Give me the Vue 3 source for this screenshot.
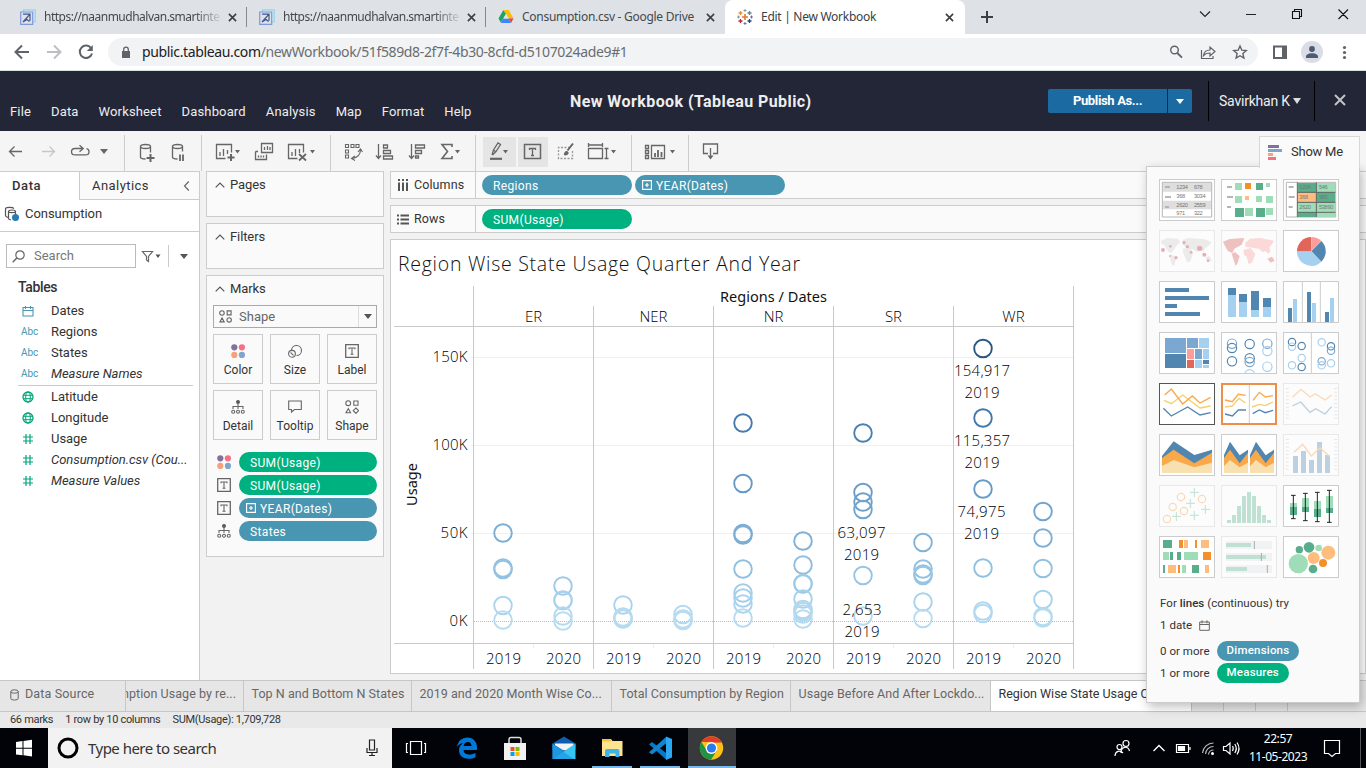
<script setup>
const browserTabs = [
  { title: 'https://naanmudhalvan.smartinternz', icon: 'arrow', fade: true },
  { title: 'https://naanmudhalvan.smartinternz', icon: 'arrow', fade: true },
  { title: 'Consumption.csv - Google Drive', icon: 'drive' },
  { title: 'Edit | New Workbook', icon: 'tableau', active: true },
]
const menus = ['File', 'Data', 'Worksheet', 'Dashboard', 'Analysis', 'Map', 'Format', 'Help']
const dimensions = [
  { name: 'Dates', type: 'date' },
  { name: 'Regions', type: 'abc' },
  { name: 'States', type: 'abc' },
  { name: 'Measure Names', type: 'abc', italic: true },
]
const measures = [
  { name: 'Latitude', type: 'geo' },
  { name: 'Longitude', type: 'geo' },
  { name: 'Usage', type: 'num' },
  { name: 'Consumption.csv (Cou...', type: 'num', italic: true },
  { name: 'Measure Values', type: 'num', italic: true },
]
const markButtons = ['Color', 'Size', 'Label', 'Detail', 'Tooltip', 'Shape']
const markPills = [
  { icon: 'Color', text: 'SUM(Usage)', green: true },
  { icon: 'Label', text: 'SUM(Usage)', green: true },
  { icon: 'Label', text: 'YEAR(Dates)', plus: true },
  { icon: 'Detail', text: 'States' },
]
const regions = [
  { name: 'ER', x: 533.5 }, { name: 'NER', x: 653.5 }, { name: 'NR', x: 773.5 }, { name: 'SR', x: 893.5 }, { name: 'WR', x: 1013.5 },
]
const ticks = [
  { label: '150K', y: 357, w: 35 }, { label: '100K', y: 445, w: 35 }, { label: '50K', y: 533, w: 27 }, { label: '0K', y: 621, w: 18 },
]
const columns = [
  [533, 568, 569.5, 605.5, 620],
  [586, 600, 600.5, 616, 621],
  [605, 617, 618.5, 619],
  [614.5, 619, 620, 620.5],
  [423, 483.5, 533.5, 535, 569, 593, 598, 604, 618],
  [541, 565, 583.5, 584, 599, 609.5, 611.5, 614, 619],
  [433, 492.5, 502, 509.5, 575.5, 616],
  [542.5, 569, 574, 575.5, 602, 618.5],
  [348.5, 418, 489, 568, 611, 613.5],
  [511.5, 538, 568.5, 599.5, 616.5, 618],
]
const stops = [
  [348, [42, 87, 131]], [418, [66, 121, 173]], [489, [103, 155, 199]], [534, [123, 173, 213]],
  [570, [146, 193, 226]], [605, [170, 212, 238]], [622, [185, 221, 241]],
]
function shade(y) {
  for (let i = 1; i < stops.length; i++) {
    if (y <= stops[i][0]) {
      const [a, ca] = stops[i - 1]
      const [b, cb] = stops[i]
      const t = (y - a) / (b - a)
      return `rgb(${ca.map((c, k) => Math.round(c + (cb[k] - c) * t)).join(',')})`
    }
  }
  return 'rgb(185,221,241)'
}
const marks = columns.flatMap((ys, i) => ys.map((y) => ({ x: 503 + i * 60, y, c: shade(y) })))
const labels = [
  { t: '154,917', x: 982, y: 376, w: 56 }, { t: '2019', x: 982, y: 398, w: 35 },
  { t: '115,357', x: 982, y: 446, w: 56 }, { t: '2019', x: 982, y: 468, w: 35 },
  { t: '74,975', x: 981.5, y: 517, w: 48 }, { t: '2019', x: 981.5, y: 539, w: 35 },
  { t: '63,097', x: 861.5, y: 538, w: 48 }, { t: '2019', x: 861.5, y: 560, w: 35 },
  { t: '2,653', x: 862, y: 615, w: 39 }, { t: '2019', x: 862, y: 637, w: 35 },
]
const sheets = [
  { t: 'Top N and Bottom N States', w: 168 },
  { t: '2019 and 2020 Month Wise Co...', w: 200 },
  { t: 'Total Consumption by Region', w: 179 },
  { t: 'Usage Before And After Lockdo...', w: 200 },
]
</script>

<template>
  <div class="screen">
    <!-- browser -->
    <div class="tabstrip">
      <div v-for="(t, i) in browserTabs" :key="i" class="btab" :class="{ active: t.active, sep: i < 2 }">
        <svg v-if="t.icon === 'arrow'" class="fav" viewBox="0 0 16 16" fill="none">
          <path d="M3.500 3V.8h11.700V13H13" stroke="#86dbe8" stroke-width="1.200" />
          <path d="M.7 3h12v12.300H.7z" stroke="#7f97dc" stroke-width="1.200" />
          <path d="M3 5.200h7v6.500M10 5.200L3 13l4-2.500 2.500 2" stroke="#3f568f" stroke-width="1.200" />
        </svg>
        <svg v-else-if="t.icon === 'drive'" class="fav" viewBox="0 0 16 16">
          <path d="M5.300 1L.5 9.500l2.300 4L8 4.800z" fill="#1ea362" /><path d="M5.300 1h5.400l4.800 8.500h-4.700L8 4.800z" fill="#fbbc04" />
          <path d="M5 9.500h5.500l2.700 4.500H2.800z" fill="#4285f4" /><path d="M10.500 9.500h5l-2.300 4.300z" fill="#ea4335" /><path d="M8 5l-2.600 4.500h5.200z" fill="#dee1e6" />
        </svg>
        <svg v-else class="fav" viewBox="0 0 16 16" fill="none" stroke-width="1.300">
          <path d="M8 5v6M5 8h6" stroke="#e8762d" stroke-width="1.600" /><path d="M3.500 2v4M1.500 4h4" stroke="#eb912c" /><path d="M12.500 2v4M10.500 4h4" stroke="#59879b" />
          <path d="M3.500 10v4M1.500 12h4" stroke="#c72037" /><path d="M12.500 10v4M10.500 12h4" stroke="#1f447e" /><path d="M8 0v3M6.500 1.500h3M0 8h3M1.500 6.500v3" stroke="#7199a6" stroke-width=".9" />
          <path d="M8 13v3M6.500 14.500h3M13 8h3M14.500 6.500v3" stroke="#5b6591" stroke-width=".9" />
        </svg>
        <span class="btitle" :class="{ fade: t.fade }">{{ t.title }}</span>
        <svg class="bx" viewBox="0 0 10 10"><path d="M1 1l8 8M9 1L1 9" stroke="#3c4043" stroke-width="1.800" /></svg>
      </div>
      <svg class="strip-tail" viewBox="964 0 402 34" fill="none" stroke="#333">
        <path d="M981 17h12M987 11v12" stroke="#3c4043" stroke-width="2" />
        <path d="M1200 11.500l5 5 5-5M1246 14.500h10" stroke="#222" stroke-width="1.100" />
        <path d="M1292.500 11.500h7v7h-7zM1294.500 11.500v-2h7v7h-2M1338.500 9.500l9.500 9.500M1348 9.500l-9.500 9.500" stroke="#111" stroke-width="1.100" />
      </svg>
    </div>
    <div class="addressbar">
      <svg class="nav" viewBox="0 34 108 36" fill="none" stroke="#5f6368" stroke-width="2">
        <path d="M29 52H16M22 45.500L15.500 52l6.500 6.500" /><path d="M47 52h13M54 45.500l6.500 6.500-6.500 6.500" stroke="#bdbfc2" />
        <path d="M91.300 48.500A6.200 6.200 0 1 0 92 53.500" /><path d="M92.800 45v6h-6z" fill="#5f6368" stroke="none" />
      </svg>
      <div class="omni">
        <svg class="lock" viewBox="0 0 10 13"><path d="M1 5h8v7H1z" fill="#5f6368" /><path d="M2.700 5V3.500a2.300 2.300 0 0 1 4.600 0V5" fill="none" stroke="#5f6368" stroke-width="1.300" /></svg>
        <span class="url"><b>public.tableau.com</b>/newWorkbook/51f589d8-2f7f-4b30-8cfd-d5107024ade9#1</span>
        <svg class="omni-icons" viewBox="1160 38 98 28" fill="none" stroke="#5f6368" stroke-width="1.400">
          <circle cx="1174.500" cy="50" r="3.800" /><path d="M1177.300 53l4.700 4.700" stroke-width="1.800" />
          <path d="M1201.500 50v8.500h11.500v-2.500M1203.500 55.500c.5-3.500 3-5.500 6.500-5.500v-3l5 4.500-5 4.500v-3c-3 0-5 .7-6.500 2.500z" stroke-width="1.200" />
          <path d="M1240 46l1.800 4.200 4.500.4-3.400 3 1 4.400-3.900-2.300-3.900 2.300 1-4.400-3.400-3 4.500-.4z" />
        </svg>
      </div>
      <svg class="right-icons" viewBox="1258 34 108 36">
        <path d="M1274 46.500h12v11.500h-12z" fill="none" stroke="#5f6368" stroke-width="2" /><path d="M1282 46h4v12h-4z" fill="#5f6368" />
        <circle cx="1312" cy="52" r="11" fill="#dadce6" /><circle cx="1312" cy="49" r="2.900" fill="#4d5b73" /><path d="M1306 58v-1.500c0-2 2.500-3.300 6-3.300s6 1.300 6 3.300V58z" fill="#4d5b73" />
        <g fill="#5f6368"><circle cx="1344.500" cy="47.500" r="1.600" /><circle cx="1344.500" cy="52.500" r="1.600" /><circle cx="1344.500" cy="57.500" r="1.600" /></g>
      </svg>
    </div>

    <!-- workbook header -->
    <header class="head">
      <nav class="menus"><span v-for="m in menus" :key="m">{{ m }}</span></nav>
      <h1>New Workbook (Tableau Public)</h1>
      <div class="account">
        <div class="publish"><span>Publish As...</span><i><svg viewBox="0 0 8 5"><path d="M0 0h8L4 5z" fill="#fff" /></svg></i></div>
        <div class="user">Savirkhan K <svg viewBox="0 0 8 6"><path d="M0 0h8L4 6z" fill="#ddd" /></svg></div>
        <div class="close"><svg viewBox="0 0 12 12"><path d="M1 1l10 10M11 1L1 11" stroke="#c4c4c8" stroke-width="2" /></svg></div>
      </div>
    </header>

    <!-- toolbar -->
    <div class="toolbar">
      <svg class="g1" viewBox="0 131 125 40" fill="none" stroke="#666" stroke-width="1.300">
        <path d="M22 151.500H9.500M14.500 146.500l-5 5 5 5" /><path d="M42 151.500h12.500M49.500 146.500l5 5-5 5" stroke="#c6c6c6" />
        <path d="M83 148.500h-8q-3.500 0-3.500 3.200t3.500 3.200h10.500q3.500 0 3.500-3.200 0-2.700-2.500-3.100M79.500 145.300l3.700 3.200-3.700 3.200" /><path d="M100 149h8l-4 5z" fill="#666" stroke="none" />
      </svg>
      <svg class="g2" viewBox="125 131 77 40" fill="none" stroke="#666" stroke-width="1.300">
        <ellipse cx="145.500" cy="146.500" rx="5" ry="2" /><path d="M140.500 146.500v10.500c0 1.300 2 2 5 2M150.500 146.500v6" /><path d="M150.500 154v8M146.500 158h8" stroke-width="2" />
        <ellipse cx="177.500" cy="146.500" rx="5" ry="2" /><path d="M172.500 146.500v10.500c0 1.300 2 2 5 2M182.500 146.500v5" /><path d="M180 154.500v6.500M183 154.500v6.500" stroke-width="1.800" />
      </svg>
      <svg class="g3" viewBox="202 131 129 40" fill="none" stroke="#666" stroke-width="1.300">
        <path d="M225.500 158.500h-9v-14h15v8M220 156v-4M223.500 156v-7M227.500 154v-4" /><path d="M231 154v7M227.500 157.500h7" stroke-width="2" />
        <path d="M261.500 143.500h11v9h-11zM255.500 151.500v8h11v-5M264.500 150v-3M267.500 150v-4M270 150v-3M258.500 157.500v-2M261 157.500v-2M263.500 157.500v-2M258 151.500h-2.500" />
        <path d="M297.500 158.500h-9v-14h15v8M292 156v-4M295.500 156v-7M299.500 153v-4" /><path d="M299 154l7 6.500M306 154l-7 6.500" stroke-width="1.800" />
        <path d="M235 150h5l-2.500 3.500zM310 150h5l-2.500 3.500z" fill="#666" stroke="none" />
      </svg>
      <svg class="g4" viewBox="331 131 145 40" fill="none" stroke="#666" stroke-width="1.300">
        <path d="M345.500 144.500h3v3h-3zM351 144.500h3v3h-3zM356 144.500h3v3h-3zM345.500 150h3v3h-3zM345.500 155h3v3h-3zM360.500 149.500c0 5-3 8-8 9M358 152l2.500-3 2 3M355 156l-3.500 2.500 3.500 2" stroke-width="1.100" />
        <path d="M378.500 144v14M376 155.500l2.500 3 2.500-3M383.500 145h4v3h-4zM383.500 150.500h7v3h-7zM383.500 156h9v3h-9z" />
        <path d="M411.500 144v14M409 155.500l2.500 3 2.500-3M415.500 145h9v3h-9zM415.500 150.500h6v3h-6zM415.500 156h3v2h-3z" />
        <path d="M452 147v-2.500h-10l5.500 7-5.500 7h10V156" stroke-width="1.600" /><path d="M455 150h5l-2.500 3.500z" fill="#666" stroke="none" />
      </svg>
      <svg class="g5" viewBox="476 131 156 40" fill="none" stroke="#666" stroke-width="1.300">
        <path d="M483 137h33v30h-33zM518 137h30v30h-30z" fill="#e5e5e5" stroke="none" />
        <path d="M492 155l1.500-5 4.500-7 2.500 1.500-4.500 7-3.500 3.500M493.500 150l2.500 2" /><path d="M490 158.800h12" stroke-width="2.200" />
        <path d="M524.500 144.500h16v14h-16z" stroke-width="1.500" /><path d="M529.500 150v-1.500h6v1.500M532.500 148.500v7M531 155.500h3" />
        <path d="M570 147.500h-11.500v11h14v-8" stroke-dasharray="2 1.500" stroke="#999" /><path d="M573 143.500l-5.500 7" stroke-width="2" /><path d="M567 151.500c-2-.3-3 2-2.500 3.500 2 0 4-.5 3.700-2.500z" fill="#666" stroke-width="1" />
        <path d="M588.500 148.500h14v10h-14zM588.500 145h14M588.500 143v4M602.500 143v4M606.500 148.500v10M604.500 148.500h4M604.500 158.500h4" />
        <path d="M503 150h5l-2.500 3.500zM611 150h5l-2.500 3.500z" fill="#666" stroke="none" />
      </svg>
      <svg class="g6" viewBox="632 131 57 40" fill="none" stroke="#666" stroke-width="1.300">
        <path d="M651.500 145.500h13v13h-13z" /><path d="M645.500 145.500h3v3h-3zM645.500 150.500h3v3h-3zM645.500 155.500h3v3h-3z" /><path d="M655 157v-4M658 157v-7M661.500 157v-5" stroke-width="1.800" /><path d="M670 150h5l-2.500 3.500z" fill="#666" stroke="none" />
      </svg>
      <svg class="g7" viewBox="689 131 60 40" fill="none" stroke="#666" stroke-width="1.300"><path d="M708 153.500h-4.500v-9.500h14v9.500h-4.500M710.500 148v10" /><path d="M707.500 155.500h6l-3 4z" fill="#666" stroke="none" /></svg>
    </div>

    <!-- workspace -->
    <main class="work">
      <aside class="data">
        <div class="dtabs"><b>Data</b><span>Analytics</span><svg viewBox="0 0 6 10"><path d="M5.300.5L1 5l4.300 4.500" fill="none" stroke="#666" stroke-width="1.200" /></svg></div>
        <div class="source">
          <svg viewBox="4 206 16 16" fill="none" stroke="#555"><path d="M8 217.500c-2-.5-2.500-1-2.500-2v-6.500c0-2 7-2 8.500-.5M8.500 211.500v7c0 .8 1 1.300 2.500 1.500M8.500 211.500c0-2 7-2 7 0v3M8.500 211.500c0 1.500 7 1.500 7 0" stroke-width="1.200" /><circle cx="15.500" cy="217.500" r="3.500" fill="#2a7ab5" stroke="none" /></svg>
          <span>Consumption</span>
        </div>
        <div class="searchrow">
          <div class="search"><svg viewBox="0 0 13 13"><circle cx="8" cy="5" r="4.200" fill="none" stroke="#666" stroke-width="1.200" /><path d="M4.800 8L.7 12.300" stroke="#666" stroke-width="1.400" /></svg><span>Search</span></div>
          <svg class="filter" viewBox="136 244 60 24"><path d="M142.500 251.500h10l-4 5v5l-2-1.500v-3.500z" fill="none" stroke="#666" stroke-width="1.200" /><path d="M155.500 254.500h5l-2.500 3.500zM180 254h8l-4 5z" fill="#555" /><path d="M168.500 245v22" stroke="#ccc" /></svg>
        </div>
        <h2>Tables</h2>
        <div class="fields">
          <template v-for="(group, gi) in [dimensions, measures]" :key="gi">
            <div v-if="gi" class="rule"></div>
            <div v-for="f in group" :key="f.name" class="field">
              <span v-if="f.type === 'abc'" class="abc">Abc</span>
              <svg v-else viewBox="0 0 12 12" fill="none">
                <path v-if="f.type === 'date'" d="M1 2.500h10v8.500H1zM1 5.500h10M3.500 1v3M8.500 1v3" stroke="#4996b2" stroke-width="1.100" />
                <g v-else-if="f.type === 'geo'" stroke="#00a67a"><circle cx="6" cy="6" r="5" stroke-width="1.300" /><ellipse cx="6" cy="6" rx="2.300" ry="5" /><path d="M1.500 4.300h9M1.500 7.700h9" /></g>
                <path v-else d="M1 4h10M1 8h10M4 1v10M8 1v10" stroke="#00a67a" stroke-width="1.200" />
              </svg>
              <span :class="{ it: f.italic }">{{ f.name }}</span>
            </div>
          </template>
        </div>
      </aside>

      <section class="cards">
        <div v-for="c in ['Pages', 'Filters']" :key="c" class="card">
          <div class="ctitle"><svg viewBox="0 0 10 6"><path d="M.7 5.300L5 1l4.300 4.300" fill="none" stroke="#555" stroke-width="1.200" /></svg>{{ c }}</div>
        </div>
        <div class="card marks">
          <div class="ctitle"><svg viewBox="0 0 10 6"><path d="M.7 5.300L5 1l4.300 4.300" fill="none" stroke="#555" stroke-width="1.200" /></svg>Marks</div>
          <div class="select">
            <svg class="shp" viewBox="0 0 14 14" fill="none" stroke="#666" stroke-width="1.200"><circle cx="3.200" cy="3.200" r="2.400" /><path d="M8.800 1h4.200v4.200H8.800zM1 12.800h4.600L3.300 8.600z" /><circle cx="10.900" cy="10.700" r="2.400" /></svg>
            <span>Shape</span><i><svg viewBox="0 0 8 5"><path d="M0 0h8L4 5z" fill="#555" /></svg></i>
          </div>
          <div class="mbtns">
            <div v-for="b in markButtons" :key="b" class="mbtn">
              <svg viewBox="0 0 14 14" fill="none" stroke="#666" stroke-width="1.100">
                <g v-if="b === 'Color'" stroke="none"><circle cx="3.300" cy="3.300" r="3.100" fill="#85709a" /><circle cx="10.900" cy="3.300" r="3.100" fill="#f76f82" /><circle cx="3.300" cy="10.900" r="3.100" fill="#f5a27a" /><circle cx="10.900" cy="10.900" r="3.100" fill="#7fa4cd" /></g>
                <g v-else-if="b === 'Size'"><path d="M3.500 6a5 5 0 1 1 5 5.500" /><circle cx="4" cy="9.800" r="3.400" /><path d="M2.500 8.300l3 3" /></g>
                <g v-else-if="b === 'Label'"><path d="M.7.7h12.600v12.600H.7z" stroke-width="1.300" /><path d="M4 5.200V4h6v1.200M7 4v6.200M5.500 10.200h3" /></g>
                <g v-else-if="b === 'Detail'"><circle cx="7" cy="2" r="1.500" fill="#555" /><path d="M7 4v5M2 9V6.500h10V9" /><circle cx="2.200" cy="11.800" r="1.500" /><circle cx="7" cy="11.800" r="1.500" /><circle cx="11.800" cy="11.800" r="1.500" /></g>
                <path v-else-if="b === 'Tooltip'" d="M.7 1h12.600v8.500H6.500L3.500 12V9.500H.7z" />
                <g v-else><circle cx="3.200" cy="3.200" r="2.400" /><path d="M8.800 1h4.200v4.200H8.800zM1 12.800h4.600L3.300 8.600z" /><path d="M10.900 8l2.700 2.700-2.700 2.700-2.700-2.700z" /></g>
              </svg>
              <span>{{ b }}</span>
            </div>
          </div>
          <div class="mpills">
            <div v-for="(p, i) in markPills" :key="i" class="mrow">
              <svg viewBox="0 0 14 14" fill="none" stroke="#666" stroke-width="1.100">
                <g v-if="p.icon === 'Color'" stroke="none"><circle cx="3.300" cy="3.300" r="3.100" fill="#85709a" /><circle cx="10.900" cy="3.300" r="3.100" fill="#f76f82" /><circle cx="3.300" cy="10.900" r="3.100" fill="#f5a27a" /><circle cx="10.900" cy="10.900" r="3.100" fill="#7fa4cd" /></g>
                <g v-else-if="p.icon === 'Label'"><path d="M.7.7h12.600v12.600H.7z" stroke-width="1.300" /><path d="M4 5.200V4h6v1.200M7 4v6.200M5.500 10.200h3" /></g>
                <g v-else><circle cx="7" cy="2" r="1.500" fill="#555" /><path d="M7 4v5M2 9V6.500h10V9" /><circle cx="2.200" cy="11.800" r="1.500" /><circle cx="7" cy="11.800" r="1.500" /><circle cx="11.800" cy="11.800" r="1.500" /></g>
              </svg>
              <div class="pill" :class="{ green: p.green, haspl: p.plus }"><svg v-if="p.plus" viewBox="0 0 10 10"><path d="M.6.6h8.800v8.800H.6z" fill="none" stroke="#fff" stroke-width="1.100" /><path d="M5 3v4M3 5h4" stroke="#fff" stroke-width="1.200" /></svg><span>{{ p.text }}</span></div>
            </div>
          </div>
        </div>
      </section>

      <section class="view">
        <div class="shelf">
          <div class="slabel"><svg viewBox="0 0 13 13" fill="#555"><path d="M1 0h2v2H1zM5 0h2v2H5zM9 0h2v2H9zM1 3.500h2V12H1zM5 3.500h2V12H5zM9 3.500h2V12H9z" /></svg>Columns</div>
          <div class="pill"><span>Regions</span></div>
          <div class="pill haspl"><svg viewBox="0 0 10 10"><path d="M.6.6h8.800v8.800H.6z" fill="none" stroke="#fff" stroke-width="1.100" /><path d="M5 3v4M3 5h4" stroke="#fff" stroke-width="1.200" /></svg><span>YEAR(Dates)</span></div>
        </div>
        <div class="shelf">
          <div class="slabel"><svg viewBox="0 0 13 13" fill="#555"><path d="M0 1.500h2v2H0zM0 5.500h2v2H0zM0 9.500h2v2H0zM3.500 1.500H12v2H3.500zM3.500 5.500H12v2H3.500zM3.500 9.500H12v2H3.500z" /></svg>Rows</div>
          <div class="pill green"><span>SUM(Usage)</span></div>
        </div>
        <div class="sheet">
          <svg class="chart" viewBox="391 240 756 433">
            <text class="title" x="398" y="271" textLength="402">Region Wise State Usage Quarter And Year</text>
            <g stroke="#f0f0f0"><path v-for="t in ticks.slice(0, 3)" :key="t.y" :d="`M470 ${t.y + 0.5}H1073`" /></g>
            <path d="M474 621.500H1073" stroke="#bbb" stroke-dasharray="1 1" />
            <g stroke="#c8c8c8">
              <path d="M394 326.500H1073M394 643.500H1073M473.500 286V669M1073.500 286V669" />
              <path v-for="x in [593.5, 713.5, 833.5, 953.5]" :key="x" :d="`M${x} 306V669`" />
            </g>
            <path d="M533.500 644v4M653.500 644v4M773.500 644v4M893.500 644v4M1013.500 644v4" stroke="#ededed" />
            <text class="axt" x="720" y="302" textLength="107">Regions / Dates</text>
            <text v-for="r in regions" :key="r.name" class="lab" text-anchor="middle" :x="r.x" y="322">{{ r.name }}</text>
            <text v-for="t in ticks" :key="t.label" class="lab" text-anchor="end" x="467.500" :y="t.y + 5" :textLength="t.w">{{ t.label }}</text>
            <text v-for="i in 10" :key="i" class="lab" text-anchor="middle" :x="443.5 + i * 60" y="664" textLength="35">{{ i % 2 ? 2019 : 2020 }}</text>
            <text class="axt" transform="translate(417 506) rotate(-90)" textLength="43">Usage</text>
            <circle v-for="(m, i) in marks" :key="i" :cx="m.x" :cy="m.y" r="8.800" fill="none" :stroke="m.c" stroke-width="1.900" />
            <text v-for="(l, i) in labels" :key="i" class="mlab" text-anchor="middle" :x="l.x" :y="l.y" :textLength="l.w">{{ l.t }}</text>
          </svg>
        </div>
      </section>
    </main>

    <!-- sheet tabs and status -->
    <div class="sheets">
      <div class="dsrc"><svg viewBox="0 0 9 12" fill="none" stroke="#666"><ellipse cx="4.500" cy="2.500" rx="3.700" ry="1.700" /><path d="M.8 2.500v7c0 2 7.400 2 7.400 0v-7" /></svg>Data Source</div>
      <div class="clip"><span>mption Usage by re...</span></div>
      <div v-for="s in sheets" :key="s.t" class="stab" :class="'w' + s.w">{{ s.t }}</div>
      <div class="stab cur">Region Wise State Usage Quarter</div>
      <div class="add"></div><div class="add"></div><div class="add"></div>
    </div>
    <div class="status"><span>66 marks</span><span>1 row by 10 columns</span><span>SUM(Usage): 1,709,728</span></div>

    <!-- taskbar -->
    <footer class="taskbar">
      <svg class="start" viewBox="0 728 48 40"><path d="M16 742l6.500-1v6.700H16zM23.500 740.900l8.500-1.200v8H23.500zM16 748.700h6.500v6.600l-6.500-.9zM23.500 748.700H32v7.800l-8.500-1.200z" fill="#fff" /></svg>
      <div class="tsearch">
        <svg class="ring" viewBox="0 0 22 22"><circle cx="11" cy="11" r="9" fill="none" stroke="#000" stroke-width="3" /></svg><span>Type here to search</span>
        <svg class="mic" viewBox="0 0 12 18" fill="none" stroke="#222" stroke-width="1.200"><path d="M3.500 1h5v10h-5zM1 9v4.500h10V9M6 13.500V16M3 16.500h6" /></svg>
      </div>
      <svg class="apps" viewBox="392 728 344 40">
        <path d="M688 728h48v40h-48z" fill="#37393d" /><path d="M592 766h40v2h-40zM640 766h40v2h-40zM688 766h48v2h-48z" fill="#76b9ed" />
        <path d="M410.500 741.500h11v13h-11zM408 743.500h-1.500v9h1.500M424 743.500h1.500v9H424" fill="none" stroke="#fff" stroke-width="1.200" />
        <path d="M457 747c1-6 5-9.500 10.500-9.500 6 0 9.500 4.500 9.500 10v2.500h-13.500c.3 3.500 3 4.500 6 4.500 2.300 0 4.500-.6 6-1.500v4.300c-2 1-4.300 1.500-7 1.500-5.500 0-9.500-3.300-9.500-8.500 0-3.500 2-6 4.500-7.300-3.500.5-5 1.700-6.500 4zM463.500 746h8c0-2.300-1.200-4-3.700-4s-4 1.700-4.300 4z" fill="#0078d7" />
        <path d="M509 744v-4.500q0-2 2-2h8q2 0 2 2v4.500" fill="none" stroke="#ddd" stroke-width="1.500" /><path d="M504 743h22v17h-22z" fill="#f2f2f2" />
        <path d="M510.500 747h4v4h-4z" fill="#f25022" /><path d="M515.500 747h4v4h-4z" fill="#7fba00" /><path d="M510.500 752h4v4h-4z" fill="#00a4ef" /><path d="M515.500 752h4v4h-4z" fill="#ffb900" />
        <path d="M552.500 743.500l11.500-7 11.500 7v6h-23z" fill="#0f5fae" /><path d="M555 743.500h18.500v7h-18.500z" fill="#f4f4f4" /><path d="M552.500 743.500l12 7.500-12 8z" fill="#1887d6" /><path d="M575.500 743.500V759h-23z" fill="#35c5f3" /><path d="M552.500 744v15h21z" fill="#1f9be6" opacity=".8" />
        <path d="M602 739h9l1.500 2h10v15h-20.500z" fill="#ffe48f" /><path d="M602 739h9v2.500h-9z" fill="#f5c242" /><path d="M605 757v-6q0-2 2-2h10.500q2 0 2 2v6h-4v-3.500h-6v3.500z" fill="#3fb4e8" />
        <path d="M649 744.200l3-2.200 14 11v6.500z" fill="#0a78c6" /><path d="M649 752.300l3 2.200 14-11v-6.500z" fill="#1184d0" /><path d="M666 736.500l6 2.500v18.500l-6 2.500z" fill="#2aa9f2" />
        <circle cx="711.500" cy="748" r="11.700" fill="#fbc116" />
        <path d="M701.400 742.100a11.700 11.700 0 0 1 20.200 0H711.500z" fill="#e33b2e" /><path d="M701.400 742.100a11.700 11.700 0 0 0 9.600 17.600l5.600-8.800-9.500 0z" fill="#229342" /><path d="M711.500 742.100h10.100" stroke="#e33b2e" />
        <circle cx="711.500" cy="748" r="5.900" fill="#fff" /><circle cx="711.500" cy="748" r="4.600" fill="#2a7bf0" />
      </svg>
      <svg class="tray" viewBox="1106 728 140 40" fill="none" stroke="#fff" stroke-width="1.200">
        <circle cx="1126" cy="743.500" r="3" /><circle cx="1119.500" cy="747" r="2.500" /><path d="M1121 753c0-7 7-7.500 8.500-2M1115 756c0-5 5-6.500 8-3" />
        <path d="M1153.500 751l5.500-5.500 5.500 5.500" stroke-width="1.400" /><path d="M1176.500 744.500h12v8h-12zM1190 747v3" /><path d="M1178.500 746.500h6v4h-6z" fill="#fff" />
        <g stroke="#bbb"><path d="M1202.500 753a11 11 0 0 1 11-10M1205.500 754a8 8 0 0 1 8-7.500M1208.500 754.500a5 5 0 0 1 5-4.500" /></g><circle cx="1212.500" cy="753.500" r="1.500" fill="#fff" stroke="none" />
        <path d="M1223.500 746.500h2.500l4-3.500v11l-4-3.500h-2.500zM1232.500 746q1.500 2 0 5M1234.800 744q3 4.500 0 9M1237 742.500q4 6 0 12" />
      </svg>
      <div class="clock"><span>22:57</span><span>11-05-2023</span></div>
      <svg class="notif" viewBox="1311 728 55 40"><path d="M1325.500 740.500h15v13h-4l-3.500 3-3.500-3h-4z" fill="none" stroke="#fff" stroke-width="1.200" /><path d="M1361.500 728v40" stroke="#555" /></svg>
    </footer>

    <!-- Show Me overlay -->
    <div class="showtab"><svg viewBox="0 0 14 15"><path d="M0 0h11v3H0z" fill="#85709a" /><path d="M0 4h14v3H0z" fill="#7fa4cd" /><path d="M0 8h5v3H0z" fill="#f5a27a" /><path d="M0 12h8v3H0z" fill="#f76f82" /></svg>Show Me</div>
    <div class="showme">
      <div class="thumbs">
        <svg viewBox="57 147 168 126"><path d="M67 157h148v104H67z" fill="#fff" stroke="#b5b5b5" stroke-width="3" /><path d="M69 159h144v26H69zM69 212h144v26H69z" fill="#dedede" /><path d="M75 168h15v6H75zM75 198h18v6H75zM75 228h12v6H75z" fill="#b5b5b5" />
          <g class="num"><text x="109" y="178">1234</text><text x="162" y="178">678</text><text x="109" y="205">368</text><text x="162" y="205">3034</text><text x="109" y="232">2620</text><text x="162" y="232">2559</text><text x="109" y="256">971</text><text x="162" y="256">322</text></g></svg>
        <svg viewBox="243 147 168 126"><path d="M261 168h15v6h-15zM261 198h18v6h-18zM261 228h12v6h-12z" fill="#b5b5b5" /><path d="M285 159h21v21h-21zM378 159h12v12h-12zM285 198h21v21h-21zM348 198h18v18h-18zM378 198h21v21h-21zM315 234h24v24h-24zM378 234h21v21h-21z" fill="#9fdcb8" /><path d="M348 159h21v21h-21zM285 234h27v27h-27zM348 234h27v27h-27z" fill="#59ad8a" /><path d="M315 159h18v18h-18z" fill="#f58f2b" /><path d="M315 198h12v12h-12z" fill="#ffbd7d" /></svg>
        <svg viewBox="429 147 168 126"><path d="M439 157h148v104H439z" fill="#fff" stroke="#b5b5b5" stroke-width="3" /><path d="M446 168h15v6h-15zM446 198h18v6h-18zM446 228h12v6h-12z" fill="#b5b5b5" /><path d="M473 159h112v102H473z" fill="#59ad8a" /><path d="M529 159h56v27h-56zM473 218h56v28h-56zM529 218h56v43h-56z" fill="#9fdcb8" /><path d="M473 188h56v28h-56z" fill="#ffbd7d" /><path d="M472 157v104M529 157v104M472 187h114M472 217h114M472 247h114" stroke="#666" stroke-width="3" />
          <g class="num"><text x="478" y="177">1234</text><text x="537" y="177">546</text><text x="478" y="207">368</text><text x="537" y="207">380</text><text x="478" y="238">2620</text><text x="537" y="238">53890</text></g></svg>
        <svg class="off" viewBox="57 300 168 126"><path d="M63 332l20-8 30 2 8 10-14 14-12 18-10-2-12-20-10-6zM92 373l12 5 4 10-6 20-6-4-6-22zM128 330l16-6 50 4 20 8-6 10-12 8-6 12-10-6-12 6-8-8-14-2-16-10zM128 356l20-2 12 12-8 26-10 6-12-28zM196 382l12-4 8 14-10 4z" fill="#ebebeb" /><g fill="#e3b0b6"><circle cx="69" cy="360" r="6" /><circle cx="132" cy="338" r="5" /><circle cx="142" cy="350" r="5" /><circle cx="179" cy="355" r="8" /><circle cx="193" cy="374" r="6" /><circle cx="108" cy="383" r="5" /><circle cx="91" cy="349" r="4" /><circle cx="90" cy="378" r="3" /><circle cx="153" cy="367" r="4" /><circle cx="204" cy="392" r="4" /></g></svg>
        <svg class="off" viewBox="243 300 168 126"><path d="M249 335l20-8 44-3-8 20-22 12-6 14-14-8-8-14zM275 372l10-6 14 12-6 20-6 10-6-18zM382 386l14-6 8 12-12 6z" fill="#edc1c0" /><path d="M316 338l14-12 30-2 42 8-6 10-8 10 4 12-8 8-6-8-10 2-12-10-40-6zM310 360l22-6 14 18-10 26-10 4-6-22-8-6z" fill="#fbd9d9" /></svg>
        <svg viewBox="429 300 168 126"><path d="M514 364l30-31a43 43 0 0 1 0 62z" fill="#5186b0" /><path d="M514 364l30 31A43 43 0 0 1 471 364z" fill="#a5d0f0" /><path d="M514 364h-43a43 43 0 0 1 43-43z" fill="#e0655b" /><path d="M514 364v-43a43 43 0 0 1 30 12z" fill="#ff9d9a" /></svg>
        <svg viewBox="57 453 168 126"><path d="M75 474h72v12H75zM75 498h132v12H75zM75 522h36v12H75zM75 546h105v12H75z" fill="#5186b0" /></svg>
        <svg viewBox="243 453 168 126"><path d="M264 474h24v87h-24zM297 492h24v69h-24zM333 483h24v78h-24zM369 504h24v57h-24z" fill="#5186b0" /><path d="M264 495h24v66h-24zM297 516h24v45h-24zM333 540h24v21h-24zM369 531h24v30h-24z" fill="#a5d0f0" /></svg>
        <svg viewBox="429 453 168 126"><path d="M487 453v126M541 453v126" stroke="#ccc" stroke-width="3" /><path d="M444 534h12v43h-12zM501 486h12v91h-12zM555 546h12v31h-12z" fill="#5186b0" /><path d="M459 507h12v70h-12zM516 519h12v58h-12zM570 504h12v73h-12z" fill="#a5d0f0" /></svg>
        <svg viewBox="57 606 168 126"><path d="M75 624h63v45H75zM141 624h33v30h-33zM165 657h21v30h-21z" fill="#7ba8d0" /><path d="M75 672h63v42H75zM189 690h18v12h-18z" fill="#5186b0" /><path d="M177 624h30v30h-30zM189 657h18v30h-18zM189 705h18v9h-18zM165 690h21v24h-21z" fill="#a5d0f0" /><path d="M141 657h21v30h-21z" fill="#ff9d9a" /><path d="M141 690h21v24h-21z" fill="#e0655b" /></svg>
        <svg viewBox="243 606 168 126" fill="none" stroke-width="3.500"><g stroke="#5186b0"><circle cx="276" cy="654" r="14" /><circle cx="329" cy="642" r="14" /><circle cx="276" cy="694" r="14" /><circle cx="329" cy="685" r="14" /></g><g stroke="#7ba8d0"><circle cx="276" cy="641" r="14" /><circle cx="382" cy="641" r="14" /><circle cx="329" cy="696" r="14" /></g><g stroke="#a5d0f0"><circle cx="382" cy="663" r="14" /><circle cx="382" cy="710" r="14" /><circle cx="329" cy="733" r="14" /></g></svg>
        <svg viewBox="429 606 168 126" fill="none" stroke-width="3.500"><path d="M514 606v126" stroke="#ccc" stroke-width="3" /><g stroke="#5186b0"><circle cx="456" cy="636" r="11" /><circle cx="485" cy="648" r="11" /><circle cx="485" cy="711" r="11" /><circle cx="573" cy="649" r="11" /></g><g stroke="#7ba8d0"><circle cx="545" cy="694" r="11" /><circle cx="573" cy="662" r="11" /></g><g stroke="#a5d0f0"><circle cx="456" cy="650" r="11" /><circle cx="545" cy="637" r="11" /><circle cx="485" cy="684" r="11" /><circle cx="456" cy="706" r="11" /><circle cx="545" cy="706" r="11" /><circle cx="573" cy="700" r="11" /></g></svg>
        <svg class="dark" viewBox="57 99 168 126" fill="none" stroke-width="4"><path d="M72 151l22 10 34-26 52 39 32-6" stroke="#f5cf72" /><path d="M74 135l20-18 34 45 29-24 23 21 32-17" stroke="#f9a84a" /><path d="M70 175l24 23 49-27 37 24 32-7" stroke="#5186b0" /></svg>
        <svg class="pick" viewBox="243 99 168 126" fill="none" stroke-width="4"><path d="M328 105v114" stroke="#ccc" stroke-width="3" /><path d="M255 171l22-3 20-23 20 14M336 171l22-8 18 4 23-11" stroke="#f5cf72" /><path d="M255 150l22 5 18-22 22 3M339 151l19-24 18 14 23-4" stroke="#f9a84a" /><path d="M255 192l22 6 18-18h23M338 191l20-11 18 8 23-7" stroke="#5186b0" /></svg>
        <svg class="off" viewBox="429 99 168 126" fill="none" stroke-width="4"><path d="M457 142l26-24 27 23 16-10 29 19 20-15" stroke="#fad9b8" /><path d="M457 168l25-12 28 31 17-11 28 16 20-22" stroke="#b9cfe0" /><path d="M442 114v93M587 114v93" stroke="#e6e6e6" stroke-width="9" stroke-dasharray="3 8.200" /></svg>
        <svg viewBox="57 252 168 126"><path d="M66 318l35-44 62 41 53-16v60H66z" fill="#5186b0" /><path d="M66 324l35-25 62 41 53-32v61H66z" fill="#f9a84a" /><path d="M66 348l35-18 62 22 53-14v31H66z" fill="#f8e0b0" /></svg>
        <svg viewBox="243 252 168 126"><path d="M252 315l18-40 29 41 25-17v70h-72zM330 315l18-40 29 41 25-17v70h-72z" fill="#5186b0" /><path d="M252 324l18-25 29 41 25-32v61h-72zM330 324l18-25 29 41 25-32v61h-72z" fill="#f9a84a" /><path d="M252 348l18-18 29 22 25-14v31h-72zM330 348l18-18 29 22 25-14v31h-72z" fill="#f8e0b0" /></svg>
        <svg class="off" viewBox="429 252 168 126" fill="none"><path d="M459 318h15v51h-15zM483 303h15v66h-15zM507 330h15v39h-15zM531 276h15v93h-15zM555 315h15v54h-15z" fill="#bdd0df" /><path d="M462 307l26-24 26 35 26-24 29 25" stroke="#fad9b8" stroke-width="4" /><path d="M442 267v93M587 267v93" stroke="#e6e6e6" stroke-width="9" stroke-dasharray="3 8.200" /></svg>
        <svg class="off" viewBox="57 405 168 126" fill="none" stroke-width="3.500"><g stroke="#fad9b8"><circle cx="123" cy="441" r="11" /><circle cx="186" cy="447" r="11" /><circle cx="98" cy="471" r="11" /><circle cx="132" cy="483" r="11" /><circle cx="81" cy="507" r="11" /></g><path d="M163 414v27M150 427h27M151 447v27M138 460h27M196 465v27M183 478h27M163 483v27M150 496h27M109 486v27M96 499h27" stroke="#bfe0d2" stroke-width="3" /></svg>
        <svg class="off" viewBox="243 405 168 126"><path d="M261 510h12v9h-12zM276 495h12v24h-12zM291 468h12v51h-12zM306 438h12v81h-12zM321 426h12v93h-12zM336 438h12v81h-12zM351 468h12v51h-12zM366 495h12v24h-12zM381 510h12v9h-12z" fill="#bfe0d2" /></svg>
        <svg viewBox="429 405 168 126"><path d="M450 459h21v36h-21zM486 444h21v42h-21zM522 453h21v48h-21zM558 438h21v51h-21z" fill="#9fdcb8" /><path d="M450 471h21v24h-21zM486 471h21v15h-21zM522 477h21v24h-21zM558 474h21v15h-21z" fill="#59ad8a" /><path d="M460 436v70M453 436h14M453 506h14M496 430v82M489 430h14M489 512h14M532 427v88M525 427h14M525 515h14M568 421v96M561 421h14M561 517h14" stroke="#222" stroke-width="3" /></svg>
        <svg viewBox="57 558 168 126"><path d="M69 570h27v24H69zM90 606h9v24h-9zM111 606h12v24h-12zM69 645h6v24h-6zM156 645h21v24h-21z" fill="#59ad8a" /><path d="M69 606h18v24H69zM132 606h42v24h-42zM126 645h12v24h-12z" fill="#9fdcb8" /><path d="M117 570h12v24h-12zM165 570h6v24h-6zM189 606h24v24h-24zM114 645h6v24h-6z" fill="#f58f2b" /><path d="M132 570h12v24h-12zM183 570h24v24h-24zM84 645h24v24H84zM195 645h12v24h-12z" fill="#ffbd7d" /></svg>
        <svg class="off" viewBox="243 558 168 126"><path d="M258 573h138v24H258zM258 609h138v24H258zM258 645h138v24H258z" fill="#f1f2f4" /><path d="M258 579h75v12h-75zM258 615h120v12H258zM258 651h63v12h-63z" fill="#bfe0d2" /><path d="M343 573v24M364 609v24M382 645v24" stroke="#aaa" stroke-width="3" /></svg>
        <svg viewBox="429 558 168 126"><g fill="#59ad8a"><circle cx="478" cy="599" r="11" /><circle cx="507" cy="592" r="16" /><circle cx="519" cy="657" r="13" /></g><g fill="#9fdcb8"><circle cx="475" cy="641" r="29" /><circle cx="536" cy="594" r="10" /></g><g fill="#ffbd7d"><circle cx="565" cy="608" r="21" /><circle cx="521" cy="624" r="18" /></g><circle cx="549" cy="639" r="12" fill="#f58f2b" /></svg>
      </div>
      <p class="hint"><span>For <b>lines</b> (continuous) try</span></p>
      <p class="hint date"><span>1 date</span><svg viewBox="0 0 11 11"><path d="M.7 2h9.600v8.300H.7zM.7 4.500h9.600M3 .3v3M8 .3v3" fill="none" stroke="#666" /></svg></p>
      <p class="hint need"><span>0 or more</span><span class="chip">Dimensions</span></p>
      <p class="hint need"><span>1 or more</span><span class="chip green">Measures</span></p>
    </div>
  </div>
</template>

<style>
body { margin: 0; overflow: hidden; }
</style>

<style scoped>
.screen { position: relative; width: 1366px; height: 768px; overflow: hidden; background: #f2f2f2; font: 13px/16px Roboto, "Liberation Sans", sans-serif; letter-spacing: 0; color: #333; display: flex; flex-direction: column; }
.screen * { box-sizing: border-box; }
svg { display: block; flex: none; }
.tabstrip { height: 34px; background: #dee1e6; display: flex; padding-left: 8px; flex: none; }
.btab { width: 239px; display: flex; align-items: center; padding-left: 12px; font: 12px/16px "Noto Sans", sans-serif; letter-spacing: -0.28px; color: #45494d; }
.btab.sep { background: linear-gradient(#85888c, #85888c) right 7px / 1px 20px no-repeat; }
.btab.active { background: #fff; border-radius: 8px 8px 0 0; width: 240px; color: #3c4043; }
.fav { width: 16px; height: 16px; margin-right: 8px; }
.btitle { width: 177px; overflow: hidden; white-space: nowrap; }
.btitle.fade { letter-spacing: -0.5px; width: 176px; margin-right: 1px; -webkit-mask-image: linear-gradient(90deg, #000 150px, transparent 180px); mask-image: linear-gradient(90deg, #000 150px, transparent 180px); }
.bx { width: 9px; height: 9px; margin-left: 6.500px; }
.strip-tail { width: 402px; height: 34px; margin-left: -1px; }
.addressbar { height: 37px; background: #fff; border-bottom: 1px solid #d6e0dc; display: flex; flex: none; }
.nav { width: 108px; height: 36px; }
.omni { width: 1150px; height: 28px; margin-top: 4px; border-radius: 14px; background: #f1f3f4; display: flex; align-items: center; padding-left: 13px; }
.lock { width: 10px; height: 13px; margin-right: 11px; }
.url { flex: 1; font: 14px/18px "Noto Sans", sans-serif; letter-spacing: -0.36px; color: #696d72; white-space: nowrap; }
.url b { font-weight: 400; color: #202124; }
.omni-icons { width: 98px; height: 28px; }
.right-icons { width: 108px; height: 36px; }
.head { height: 60px; background: #232637; flex: none; display: flex; color: #eee; font-size: 14px; }
.menus { width: 570px; display: flex; gap: 20px; padding: 33px 0 0 10px; font-size: 13px; letter-spacing: 0.15px; }
h1 { margin: 22px 0 0; width: 478px; font-size: 16px; line-height: 18px; font-weight: 700; letter-spacing: 0.42px; white-space: nowrap; }
.account { display: flex; }
.publish { display: flex; width: 144px; height: 24px; margin-top: 18px; font-size: 13px; font-weight: 700; color: #fff; line-height: 24px; letter-spacing: -0.35px; }
.publish span { width: 119px; background: #1b6aa2; border-radius: 2px 0 0 2px; text-align: center; margin-right: 1px; }
.publish i { width: 24px; background: #1b6aa2; border-radius: 0 2px 2px 0; display: grid; place-items: center; }
.publish svg { width: 8px; height: 5px; }
.user { height: 40px; width: 107px; margin: 10px 0 0 16px; padding-left: 10px; border-left: 1px solid #000; border-right: 1px solid #000; display: flex; align-items: center; gap: 3px; letter-spacing: -0.22px; white-space: nowrap; }
.user svg { width: 8px; height: 6px; }
.close { padding: 23px 0 0 19px; }
.close svg { width: 12px; height: 12px; }
.toolbar { height: 40px; background: #f5f5f5; flex: none; display: flex; }
.toolbar svg { height: 40px; background: linear-gradient(#ccc, #ccc) right 4px / 1px 36px no-repeat; }
.toolbar .g1 { width: 125px; } .toolbar .g2 { width: 77px; } .toolbar .g3 { width: 129px; } .toolbar .g4 { width: 145px; } .toolbar .g5 { width: 156px; } .toolbar .g6 { width: 57px; } .toolbar .g7 { width: 60px; background: none; }
.work { height: 509px; flex: none; display: flex; }
.data { width: 200px; background: #fff; border-right: 1px solid #ccc; border-top: 1px solid #ccc; }
.dtabs { height: 28px; display: flex; line-height: 27px; }
.dtabs b { width: 79px; padding-left: 12px; font-weight: 500; letter-spacing: 0.6px; }
.dtabs span { flex: 1; border-left: 1px solid #ccc; border-bottom: 1px solid #ccc; background: #fafafa; padding-left: 12px; letter-spacing: 0.45px; }
.dtabs svg { width: 17px; height: 28px; padding: 9px 8px 8px 0; border-bottom: 1px solid #ccc; background: #fafafa; }
.source { height: 32px; border-bottom: 1px solid #ccc; display: flex; align-items: flex-start; padding: 6px 0 0 4px; letter-spacing: -0.05px; }
.source svg { width: 16px; height: 16px; margin-right: 5px; }
.searchrow { display: flex; padding: 12px 0 0 6px; }
.search { width: 130px; height: 24px; border: 1px solid #bbb; display: flex; align-items: center; padding-left: 5px; gap: 9px; color: #777; }
.search svg { width: 13px; height: 13px; }
.filter { width: 60px; height: 24px; }
h2 { margin: 10px 0 0 18px; font-weight: 500; font-size: 14px; line-height: 18px; letter-spacing: -0.35px; }
.fields { padding: 4px 6px 0 18px; }
.field { height: 21px; display: grid; grid-template-columns: 33px 1fr; align-items: center; white-space: nowrap; letter-spacing: -0.05px; }
.field svg { width: 12px; height: 12px; margin-left: 4px; }
.abc { font-size: 10px; color: #4996b2; padding-left: 3px; }
.it { font-style: italic; }
.rule { height: 1px; background: #ccc; margin: 1px 0 0; }
.cards { width: 190px; padding: 0 6px; display: flex; flex-direction: column; gap: 6px; }
.card { width: 178px; height: 46px; border: 1px solid #ccc; background: #fafafa; padding: 5px 6px; }
.card.marks { height: 282px; }
.ctitle { display: flex; align-items: center; gap: 5px; padding-left: 2px; height: 16px; letter-spacing: -0.1px; }
.ctitle svg { width: 10px; height: 6px; }
.select { height: 23px; margin-top: 8px; border: 1px solid #aaa; display: flex; align-items: center; color: #666; padding-left: 5px; }
.select .shp { width: 13px; height: 13px; margin-right: 7px; }
.select span { flex: 1; }
.select i { width: 18px; height: 21px; border-left: 1px solid #ddd; display: grid; place-items: center; }
.select i svg { width: 8px; height: 5px; }
.mbtns { display: grid; grid-template-columns: repeat(3, 50px); gap: 6px 7px; margin-top: 6px; }
.mbtn { height: 50px; border: 1px solid #ccc; display: flex; flex-direction: column; align-items: center; padding-top: 9px; font-size: 12px; gap: 4px; letter-spacing: 0; }
.mbtn svg, .mrow svg { width: 14px; height: 14px; }
.mpills { margin-top: 12px; display: flex; flex-direction: column; gap: 3px; }
.mrow { display: flex; align-items: center; padding-left: 4px; gap: 8px; height: 20px; }
.pill { height: 20px; border-radius: 10px; background: #4996b2; color: #fff; padding: 0 11px; white-space: nowrap; display: flex; align-items: center; gap: 4px; font-size: 12px; letter-spacing: 0.35px; line-height: 16px; }
.pill span { padding-top: 2px; }
.pill.green, .chip.green { background: #00b180; }
.pill.haspl { padding-left: 7px; }
.pill svg, .mrow .pill svg { width: 10px; height: 10px; }
.mrow .pill { width: 138px; }
.view { width: 976px; }
.shelf { height: 28px; border: 1px solid #ccc; border-right: 0; background: #fafafa; display: flex; align-items: center; gap: 3px; margin-bottom: 6px; }
.shelf .pill { width: 150px; }
.slabel { width: 85px; height: 26px; border-right: 1px solid #ccc; display: flex; align-items: center; gap: 4px; padding-left: 6px; letter-spacing: 0.1px; margin-right: 3px; font-size: 12.500px; }
.slabel svg { width: 13px; height: 13px; }
.sheet { height: 435px; border: 1px solid #ccc; background: #fff; }
.chart { width: 756px; height: 433px; font-family: "Noto Sans", sans-serif; letter-spacing: 0; }
.title { font: 300 19.500px "Open Sans", sans-serif; fill: #111; }
.axt { font: 400 14.500px "Noto Sans", sans-serif; fill: #111; }
.lab { font: 300 15px "Open Sans", sans-serif; fill: #000; }
.mlab { font: 300 15px "Open Sans", sans-serif; fill: #000; }
.sheets { height: 32px; flex: none; border-top: 1px solid #c6c6c6; border-bottom: 1px solid #c6c6c6; background: #e6e6e6; display: flex; color: #666; line-height: 26px; font-size: 12.500px; letter-spacing: 0.05px; white-space: nowrap; }
.dsrc { width: 126px; border-right: 1px solid #c6c6c6; display: flex; padding-left: 10px; gap: 6px; letter-spacing: 0.15px; }
.dsrc svg { width: 9px; height: 12px; margin-top: 8px; }
.clip { width: 118px; border-right: 1px solid #c6c6c6; overflow: hidden; display: flex; justify-content: flex-end; padding-right: 7px; }
.stab { border-right: 1px solid #c6c6c6; padding-left: 7.500px; overflow: hidden; }
.w168 { width: 168px; } .w200 { width: 200px; } .w179 { width: 179px; }
.cur { width: 201px; background: #fff; color: #333; letter-spacing: 0; }
.add { width: 32px; border-right: 1px solid #c6c6c6; }
.status { height: 16px; flex: none; background: #e9e9e9; padding-left: 10px; display: flex; gap: 12px; font-size: 11px; line-height: 15px; letter-spacing: -0.31px; }
.taskbar { height: 40px; flex: none; background: #010308; display: flex; color: #fff; }
.start { width: 48px; height: 40px; }
.tsearch { width: 344px; background: #f2f2f2; color: #333; display: flex; align-items: center; padding-left: 9px; font: 15px/20px "Noto Sans", sans-serif; letter-spacing: -0.52px; }
.ring { width: 22px; height: 22px; margin-right: 9px; }
.tsearch span { flex: 1; }
.mic { width: 12px; height: 18px; margin-right: 14px; }
.apps { width: 344px; height: 40px; }
.tray { width: 140px; height: 40px; margin-left: 370px; }
.clock { width: 64px; display: flex; flex-direction: column; align-items: center; font: 12px/18px "Noto Sans", sans-serif; letter-spacing: -0.45px; padding-top: 2px; }
.notif { width: 55px; height: 40px; }
.showtab { position: absolute; left: 1259px; top: 136px; width: 101px; height: 32px; background: #fafafa; border: 1px solid #d8d8d8; border-bottom: 0; display: flex; gap: 9px; align-items: center; padding: 0 0 1px 8px; letter-spacing: -0.25px; z-index: 2; }
.showtab svg { width: 14px; height: 15px; }
.showme { position: absolute; left: 1146px; top: 166px; width: 214px; height: 537px; background: #fafafa; border: 1px solid #ccc; box-shadow: 2px 4px 10px rgba(0, 0, 0, 0.25); padding: 12px; font-size: 11.500px; }
.thumbs { display: grid; grid-template-columns: repeat(3, 56px); gap: 9px 6px; margin-bottom: 17px; }
.thumbs svg { width: 56px; height: 42px; background: #fff; outline: 1px solid #ccc; outline-offset: -1px; }
.thumbs .off { background: #fcfcfc; outline-color: #e8e8e8; }
.thumbs .dark { outline-color: #555; }
.thumbs .pick { outline: 2px solid #eb8f4b; outline-offset: -2px; }
.num { font: 17px "Liberation Sans", sans-serif; letter-spacing: -1px; fill: #777; }
.hint { margin: 0 0 0 1px; height: 16px; display: flex; align-items: center; gap: 7px; white-space: nowrap; letter-spacing: 0.05px; }
.hint b { font-weight: 500; }
.date { margin-top: 6px; }
.date svg { width: 11px; height: 11px; }
.need { height: 20px; margin-top: 8px; }
.need + .need { margin-top: 2px; }
.chip { height: 20px; line-height: 19px; border-radius: 10px; background: #4996b2; color: #fff; font-weight: 500; font-size: 11.500px; padding: 0 10px; letter-spacing: 0.2px; }
</style>
